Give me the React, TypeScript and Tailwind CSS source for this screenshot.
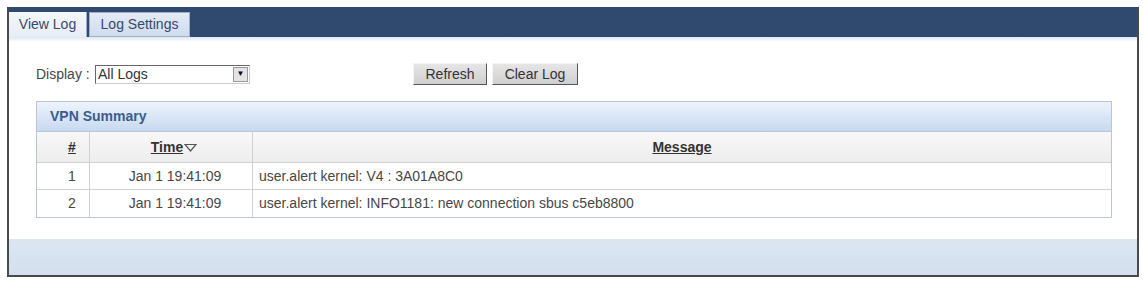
import { Fragment } from "react"

const rows = [
  { n: "1", time: "Jan 1 19:41:09", msg: "user.alert kernel: V4 : 3A01A8C0" },
  { n: "2", time: "Jan 1 19:41:09", msg: "user.alert kernel: INFO1181: new connection sbus c5eb8800" },
]

export default function App() {
  return (
    <div className="w-[1143px] h-[281px] bg-white pt-[7px] pl-[7px] pr-[4px] font-['Liberation_Sans',Arial,sans-serif] text-[14px] text-[#474747]">
      <div className="h-[270px] flex flex-col border-l-2 border-r-2 border-b-2 border-[#4a4a4a] bg-white">
        {/* tab bar */}
        <div className="h-[30px] bg-[#2f4a6e] flex items-end gap-[2px]">
          <div className="h-[25px] w-[78px] flex items-center justify-center bg-gradient-to-b from-[#f4f7fb] to-[#e6edf6] text-[#3b4866] border-r border-[#9fb0c6]">
            View Log
          </div>
          <div className="h-[25px] w-[101px] flex items-center justify-center bg-gradient-to-b from-[#e3ebf6] to-[#cfdcee] text-[#3b4866] border border-[#9fb0c6]">
            Log Settings
          </div>
        </div>
        <div className="h-[5px] bg-gradient-to-b from-[#dde7f4] to-white" />

        {/* content */}
        <div className="flex-1 flex flex-col pl-[27px] pr-[25px]">
          <div className="mt-[21px] h-[22px] flex items-center">
            <span className="w-[59px]">Display :</span>
            <div className="w-[155px] h-[19px] flex items-center border border-t-[#666] border-l-[#666] border-r-[#ccc] border-b-[#ccc] bg-white">
              <span className="flex-1 pl-[2px] text-[#333]">All Logs</span>
              <span className="w-[15px] h-[15px] mr-[1px] flex items-center justify-center bg-[#e4e4e4] border border-[#999] text-[8px] text-black">▼</span>
            </div>
            <button className="ml-[163px] w-[74px] h-[22px] bg-gradient-to-b from-[#e6e6e6] to-[#cfcfcf] border border-t-[#f4f4f4] border-l-[#f4f4f4] border-r-[#555] border-b-[#555] text-[#333]">
              Refresh
            </button>
            <button className="ml-[5px] w-[86px] h-[22px] bg-gradient-to-b from-[#e6e6e6] to-[#cfcfcf] border border-t-[#f4f4f4] border-l-[#f4f4f4] border-r-[#555] border-b-[#555] text-[#333]">
              Clear Log
            </button>
          </div>

          <div className="mt-[16px] border border-[#b9c6d6]">
            <div className="h-[30px] flex items-center pl-[13px] bg-gradient-to-b from-[#eef3fb] to-[#c7d9f0] border-b border-[#b9c6d6] font-bold text-[#3a5d8c]">
              VPN Summary
            </div>
            <div className="grid grid-cols-[53px_163px_1fr]">
              <div className="h-[31px] flex items-center justify-center pl-[18px] bg-gradient-to-b from-[#f8f8f8] to-[#ededed] border-r border-b border-[#d0d0d0] text-[#333] font-bold underline">
                #
              </div>
              <div className="h-[31px] flex items-center justify-center pl-[6px] bg-gradient-to-b from-[#f8f8f8] to-[#ededed] border-r border-b border-[#d0d0d0] text-[#333] font-bold">
                <span className="underline">Time</span>
                <svg width="13" height="9" viewBox="0 0 13 9" className="ml-[1px]">
                  <path d="M1 1.5 H12 L6.5 8 Z" fill="none" stroke="#555" strokeWidth="1.2" />
                </svg>
              </div>
              <div className="h-[31px] flex items-center justify-center bg-gradient-to-b from-[#f8f8f8] to-[#ededed] border-b border-[#d0d0d0] text-[#333] font-bold underline">
                Message
              </div>
              {rows.map((r, i) => (
                <Fragment key={r.n}>
                  <div className={"h-[27px] flex items-center justify-center pl-[18px] border-r border-[#d0d0d0] " + (i === 0 ? "border-b" : "")}>
                    {r.n}
                  </div>
                  <div className={"h-[27px] flex items-center justify-center pl-[8px] border-r border-[#d0d0d0] " + (i === 0 ? "border-b" : "")}>
                    {r.time}
                  </div>
                  <div className={"h-[27px] flex items-center pl-[6px] border-[#d0d0d0] " + (i === 0 ? "border-b" : "")}>
                    {r.msg}
                  </div>
                </Fragment>
              ))}
            </div>
          </div>
        </div>

        <div className="h-[36px] bg-gradient-to-b from-[#dce6f3] to-[#d3dfee]" />
      </div>
    </div>
  )
}
